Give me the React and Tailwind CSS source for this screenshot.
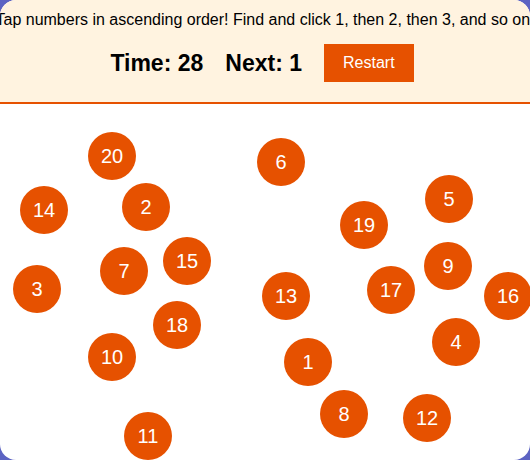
import React, { useState, useEffect } from "react";

// Circle centres on the play field (px, relative to the field's top-left)
const BUBBLES = [
  { n: 20, x: 112, y: 52 },
  { n: 6, x: 281, y: 58 },
  { n: 5, x: 449, y: 95 },
  { n: 14, x: 44, y: 106 },
  { n: 2, x: 146, y: 103 },
  { n: 19, x: 364, y: 121 },
  { n: 15, x: 187, y: 157 },
  { n: 9, x: 448, y: 162 },
  { n: 7, x: 124, y: 167 },
  { n: 3, x: 37, y: 185 },
  { n: 17, x: 391, y: 186 },
  { n: 13, x: 286, y: 192 },
  { n: 16, x: 508, y: 192 },
  { n: 18, x: 177, y: 221 },
  { n: 4, x: 456, y: 238 },
  { n: 10, x: 112, y: 253 },
  { n: 1, x: 308, y: 258 },
  { n: 8, x: 344, y: 310 },
  { n: 12, x: 427, y: 314 },
  { n: 11, x: 148, y: 332 },
];

const App = () => {
  const [time, setTime] = useState(28);
  const [next, setNext] = useState(1);
  const [found, setFound] = useState([]);

  useEffect(() => {
    const timer = setInterval(() => setTime((t) => t), 1000);
    return () => clearInterval(timer);
  }, []);

  const tap = (n) => {
    if (n !== next) return;
    setFound((f) => [...f, n]);
    setNext(n + 1);
  };

  const restart = () => {
    setFound([]);
    setNext(1);
    setTime(0);
  };

  return (
    <div className="w-[530px] h-[460px] bg-[#5c63c2] overflow-hidden font-['Liberation_Sans',Arial,sans-serif]">
      <div className="h-full bg-white rounded-2xl overflow-hidden flex flex-col">
        {/* Instructions and score bar */}
        <div className="bg-[#fff3e0] border-b-2 border-[#e65100] pt-[8px] pb-[20px] flex flex-col items-center">
          <p className="w-full flex justify-center whitespace-nowrap text-[16px] leading-6 text-black">
            <span>Tap numbers in ascending order! Find and click 1, then 2, then 3, and so on.</span>
          </p>
          <div className="mt-[12px] flex items-center gap-[22px] pr-[6px]">
            <span className="text-[23px] font-bold text-black leading-none">Time: {time}</span>
            <span className="text-[23px] font-bold text-black leading-none">Next: {next}</span>
            <button
              onClick={restart}
              className="bg-[#e65100] text-white text-[16px] leading-[18px] px-[19px] py-[10px]"
            >
              Restart
            </button>
          </div>
        </div>

        {/* Play field */}
        <div className="relative flex-1">
          {BUBBLES.filter((b) => !found.includes(b.n)).map((b) => (
            <button
              key={b.n}
              onClick={() => tap(b.n)}
              className="absolute w-12 h-12 rounded-full bg-[#e65100] text-white text-[20px] flex items-center justify-center"
              style={{ left: b.x - 24, top: b.y - 24 }}
            >
              {b.n}
            </button>
          ))}
        </div>
      </div>
    </div>
  );
};

export default App;
